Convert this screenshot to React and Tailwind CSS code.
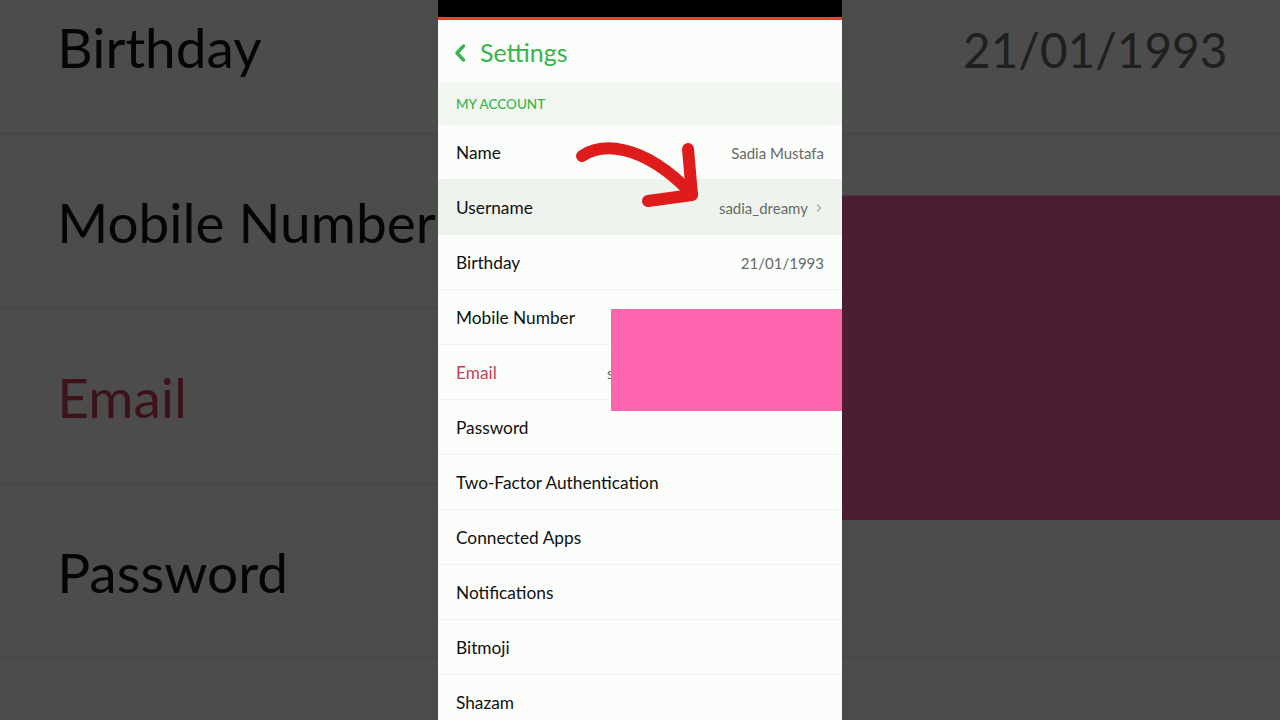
import React from "react";

const FONT = { fontFamily: "Lato, 'Noto Sans', sans-serif" };

function Row({ label, value, chevron, highlight, labelClass, valueClass }) {
  return (
    <div
      className={`flex h-[55px] shrink-0 items-center justify-between border-b border-[#eff2ef] pl-[18px] pt-[2px] ${
        chevron ? "pr-[20px]" : "pr-[18px]"
      } ${highlight ? "bg-[#eef3ee]" : ""}`}
    >
      <span className={`whitespace-nowrap text-[17.3px] ${labelClass || "text-[#111]"}`}>{label}</span>
      {value ? (
        <span className={`flex items-center gap-[8px] whitespace-nowrap text-[15px] text-[#666b66] ${valueClass || ""}`}>
          {value}
          {chevron ? (
            <svg width="6" height="10" viewBox="0 0 6 10">
              <path d="M1.5 2 L4.5 5 L1.5 8" fill="none" stroke="#b0b4b0" strokeWidth="1.5" strokeLinecap="round" strokeLinejoin="round" />
            </svg>
          ) : null}
        </span>
      ) : null}
    </div>
  );
}

function Phone({ showArrow }) {
  return (
    <div className="relative flex h-[720px] w-[404px] flex-col overflow-hidden bg-[#fafdfa]" style={FONT}>
      <div className="h-[17px] shrink-0 bg-black" />
      <div className="h-[3px] shrink-0 bg-[#e8432f]" />
      <div className="flex h-[62px] shrink-0 items-center gap-[14px] pl-[16px] pt-[3px]">
        <svg width="12" height="18" viewBox="0 0 12 18">
          <path d="M9.5 2 L3 9 L9.5 16" fill="none" stroke="#38b44a" strokeWidth="3.4" strokeLinecap="round" strokeLinejoin="round" />
        </svg>
        <span className="text-[25px] text-[#38b44a]">Settings</span>
      </div>
      <div className="flex h-[43px] shrink-0 items-center bg-[#f1f6f1] px-[18px] pt-[2px]">
        <span className="text-[13.5px] font-medium text-[#38b44a]">MY ACCOUNT</span>
      </div>
      <Row label="Name" value="Sadia Mustafa" />
      <Row label="Username" value="sadia_dreamy" chevron highlight />
      <Row label="Birthday" value="21/01/1993" />
      <Row label="Mobile Number" value="+92 300 1234567" />
      <Row label="Email" value="sadiamustafa.dreamy@gmail.com" labelClass="text-[#cc4157]" />
      <Row label="Password" />
      <Row label="Two-Factor Authentication" />
      <Row label="Connected Apps" />
      <Row label="Notifications" />
      <Row label="Bitmoji" />
      <Row label="Shazam" />
      <div className="absolute left-[173px] top-[309px] h-[102px] w-[231px] bg-[#fe65ae]" />
      {showArrow ? (
        <svg className="absolute left-[122px] top-[130px]" width="160" height="90" viewBox="0 0 160 90">
          <path d="M22 26 C 40 14, 80 10, 132 64" fill="none" stroke="#df1c1c" strokeWidth="12" strokeLinecap="round" />
          <path d="M128 19 L132 65 L88 71" fill="none" stroke="#df1c1c" strokeWidth="12" strokeLinecap="round" strokeLinejoin="round" />
        </svg>
      ) : null}
    </div>
  );
}

export default function App() {
  return (
    <div className="relative h-[720px] w-[1280px] overflow-hidden bg-[#4d4d4d]">
      <div className="absolute left-0 top-[-787px] origin-top-left scale-[3.18]">
        <Phone />
      </div>
      <div className="absolute inset-0 bg-black/70" />
      <div className="relative mx-auto w-[404px]">
        <Phone showArrow />
      </div>
    </div>
  );
}
